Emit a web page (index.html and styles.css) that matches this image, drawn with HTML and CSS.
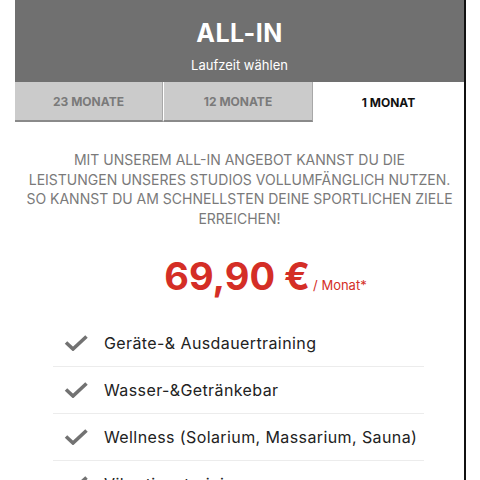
FILE: index.html
```html
<!DOCTYPE html>
<html lang="de">
<head>
<meta charset="utf-8">
<link rel="stylesheet" href="styles.css">
</head>
<body>
<div class="frame">
  <div class="card">
    <header class="head">
      <h1 class="title">ALL-IN</h1>
      <p class="subtitle">Laufzeit wählen</p>
    </header>
    <nav class="tabs">
      <div class="tab">23 MONATE</div>
      <div class="tab">12 MONATE</div>
      <div class="tab active">1 MONAT</div>
    </nav>
    <p class="desc">MIT UNSEREM ALL-IN ANGEBOT KANNST DU DIE<br>LEISTUNGEN UNSERES STUDIOS VOLLUMFÄNGLICH NUTZEN.<br>SO KANNST DU AM SCHNELLSTEN DEINE SPORTLICHEN ZIELE<br>ERREICHEN!</p>
    <div class="price"><span class="amount">69,90 €</span><span class="per">/ Monat*</span></div>
    <ul class="features">
      <li class="feature"><svg class="check" viewBox="0 0 24 16"><path d="M2 7.5 L9 14 L22.5 1.5"/></svg><span>Geräte-&amp; Ausdauertraining</span></li>
      <li class="feature"><svg class="check" viewBox="0 0 24 16"><path d="M2 7.5 L9 14 L22.5 1.5"/></svg><span>Wasser-&amp;Getränkebar</span></li>
      <li class="feature"><svg class="check" viewBox="0 0 24 16"><path d="M2 7.5 L9 14 L22.5 1.5"/></svg><span>Wellness (Solarium, Massarium, Sauna)</span></li>
      <li class="feature"><svg class="check" viewBox="0 0 24 16"><path d="M2 7.5 L9 14 L22.5 1.5"/></svg><span>Vibrationstraining</span></li>
    </ul>
  </div>
</div>
</body>
</html>
```
FILE: styles.css
```css
html, body {
  margin: 0;
  padding: 0;
  background: #fff;
  font-family: Inter, "Open Sans", sans-serif;
  overflow: hidden;
}
.frame {
  width: 449px;
  margin-left: 15px;
  border-right: 2px solid #111;
  height: 480px;
  overflow: hidden;
}
.card {
  display: flex;
  flex-direction: column;
}
.head {
  background: #707070;
  height: 82px;
  box-sizing: border-box;
  padding-top: 18px;
  text-align: center;
  color: #fff;
}
.title {
  margin: 0;
  font-size: 25px;
  line-height: 30px;
  font-weight: 700;
  letter-spacing: 0.5px;
}
.subtitle {
  margin: 8px 0 0;
  font-size: 13px;
  line-height: 18px;
}
.tabs {
  display: grid;
  grid-template-columns: 148px 150px 1fr;
  height: 40px;
}
.tab {
  background: #cbcbcb;
  border-bottom: 2px solid #8a8a8a;
  border-right: 1px solid #a8a8a8;
  display: flex;
  align-items: center;
  justify-content: center;
  font-size: 12px;
  font-weight: 700;
  color: #7a7a7a;
}
.tab + .tab {
  border-left: 1px solid #fff;
}
.tab.active {
  background: #fff;
  color: #111;
  border: none;
}
.desc {
  margin: 28px 0 0;
  text-align: center;
  font-size: 14px;
  line-height: 19.7px;
  color: #7a7a7a;
  white-space: nowrap;
}
.price {
  display: flex;
  justify-content: center;
  align-items: baseline;
  margin-top: 25px;
  color: #d42e26;
  padding-left: 52px;
}
.amount {
  font-size: 38px;
  font-weight: 700;
  line-height: 44px;
}
.per {
  font-size: 13px;
  margin-left: 3px;
}
.features {
  list-style: none;
  margin: 22px 0 0 38px;
  padding: 0;
  width: 371px;
}
.feature {
  display: flex;
  align-items: center;
  height: 47px;
  border-bottom: 1px solid #ececec;
  font-size: 16px;
  letter-spacing: 0.4px;
  color: #222;
  box-sizing: border-box;
}
.check {
  width: 24px;
  height: 16px;
  margin: 0 16px 0 11px;
  fill: none;
  stroke: #727272;
  stroke-width: 3.6;
}
```
